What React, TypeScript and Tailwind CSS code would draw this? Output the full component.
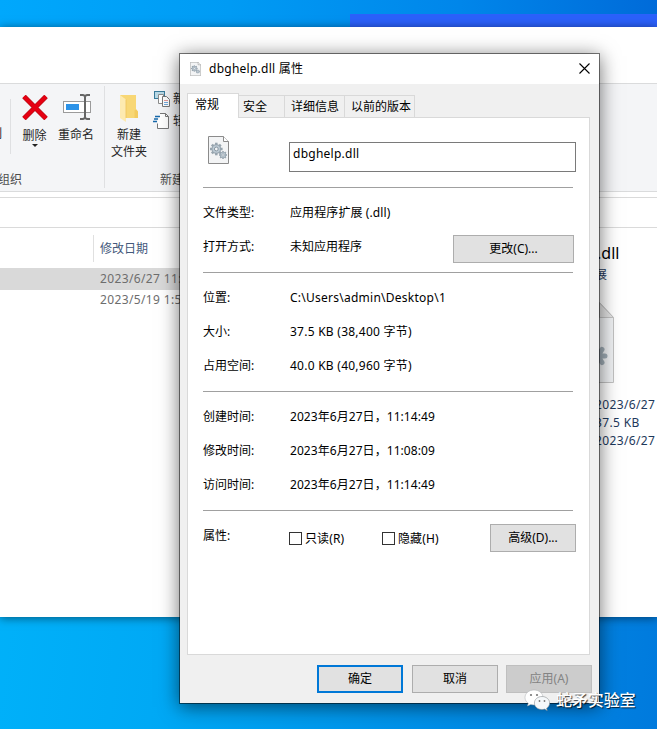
import type { ReactNode } from "react";

const times = [
  { label: "创建时间:", value: "2023年6月27日，11:14:49" },
  { label: "修改时间:", value: "2023年6月27日，11:08:09" },
  { label: "访问时间:", value: "2023年6月27日，11:14:49" },
];

const sizes = [
  { label: "位置:", value: "C:\\Users\\admin\\Desktop\\1" },
  { label: "大小:", value: "37.5 KB (38,400 字节)" },
  { label: "占用空间:", value: "40.0 KB (40,960 字节)" },
];

function Gear({ cx, cy, r }: { cx: number; cy: number; r: number }) {
  return (
    <g transform={`translate(${cx} ${cy})`}>
      {[0, 45, 90, 135].map((a) => (
        <rect
          key={a}
          x={-r * 0.2}
          y={-r}
          width={r * 0.4}
          height={r * 2}
          fill="#97a4ae"
          transform={`rotate(${a})`}
        />
      ))}
      <circle r={r * 0.76} fill="#97a4ae" />
      <circle r={r * 0.6} fill="#bccad4" />
      <circle r={r * 0.3} fill="#f3f5f6" stroke="#84929d" strokeWidth={r * 0.15} />
    </g>
  );
}

function DllIcon({ className }: { className: string }) {
  return (
    <svg viewBox="0 0 21 28" className={className} preserveAspectRatio="none">
      <path d="M.5.5h15l5 5v22H.5z" fill="#f3f4f5" stroke="#8b8b8b" />
      <path d="M15.5.5v5h5" fill="#fff" stroke="#8b8b8b" />
      <Gear cx={8.3} cy={13} r={6.3} />
      <Gear cx={15} cy={19} r={4} />
    </svg>
  );
}

function Row({ label, children }: { label: string; children: ReactNode }) {
  return (
    <div className="flex h-[34px] items-center">
      <span className="w-[87px] shrink-0 pt-[2px]">{label}</span>
      {children}
    </div>
  );
}

function Separator() {
  return <div className="mt-[9px] mb-[7px] h-px w-[370px] bg-[#a0a0a0]" />;
}

function Button({ className = "", children }: { className?: string; children: ReactNode }) {
  return (
    <button
      className={`flex h-7 shrink-0 items-center justify-center border pb-px ${className}`}
    >
      {children}
    </button>
  );
}

function Checkbox({ label }: { label: string }) {
  return (
    <label className="flex items-center gap-[3px]">
      <span className="size-[13px] border border-[#333] bg-white" />
      <span className="pt-px tracking-[0.1px]">{label}</span>
    </label>
  );
}

function Ribbon() {
  return (
    <div className="flex h-[109px] border-y border-[#dadbdc] bg-[#f4f5f7] text-[#262626]">
      <div className="relative flex w-[105px] shrink-0">
        <div className="mt-[15px] h-[55px] w-[11px] shrink-0 overflow-hidden border-r border-[#dfe0e2]">
          <span className="float-right mt-[27px] mr-2 leading-4">制</span>
        </div>
        <div className="flex w-[47px] flex-col items-center pt-[11px]">
          <svg className="h-[25px] w-[26px]" viewBox="0 0 26 25">
            <path d="M2 1.5 24 23.5M24 1.5 2 23.5" stroke="#b80d16" strokeWidth="5" />
            <path d="M2 1.5 24 23.5M24 1.5 2 23.5" stroke="#e60012" strokeWidth="3.7" />
          </svg>
          <span className="mt-2 leading-4">删除</span>
          <span className="border-x-[3px] border-t-[3px] border-x-transparent border-t-[#222]" />
        </div>
        <div className="flex w-9 flex-col items-center pt-[9px]">
          <svg className="ml-[2px] h-7 w-[30px]" viewBox="0 0 30 28">
            <rect x="1.5" y="8.5" width="27" height="11" fill="#fff" stroke="#9b9b9b" />
            <rect x="4" y="11" width="13" height="6" fill="#2c93e8" />
            <path
              d="M18 2h3l2 1 2-1h3M18 26h3l2-1 2 1h3M23 2.500v23"
              fill="none"
              stroke="#666"
              strokeWidth="2"
            />
          </svg>
          <span className="mt-[6px] whitespace-nowrap leading-4">重命名</span>
        </div>
        <span className="absolute -left-0.5 top-[88px] leading-4 text-[#4c4c4c]">组织</span>
        <div className="mt-[2px] ml-auto h-[102px] w-px bg-[#dfe0e2]" />
      </div>
      <div className="relative flex">
        <div className="flex w-12 flex-col items-center pt-[10px]">
          <svg className="h-7 w-5" viewBox="0 0 20 28">
            <path d="M1 1h16v14l2 2.500V24H5z" fill="#f8d775" />
            <path d="M1 1l6 4.500V28L1 24z" fill="#fdeab0" />
            <path d="M7 5.500V24" stroke="#edc35c" strokeWidth=".8" />
            <path d="M15.500 16.500V24H19v-6.500l-2-2z" fill="#f3cb5f" />
          </svg>
          <span className="mt-[4px] whitespace-nowrap leading-[17px]">新建</span>
          <span className="whitespace-nowrap leading-[17px]">文件夹</span>
        </div>
        <div className="flex flex-col gap-1 pt-[6px]">
          <div className="flex items-center gap-[3px]">
            <svg className="h-[18px] w-[17px]" viewBox="0 0 17 18">
              <rect x="1.500" y="1.500" width="10" height="7" fill="#b9d9e6" stroke="#397b9b" />
              <path d="M5.500 4.500h5v9h-5z" fill="#fff" stroke="#8b8b8b" />
              <path d="M9.500 6.500h4l3 3v7h-7z" fill="#fff" stroke="#777" />
              <path d="M11 10.500h4" stroke="#e39a9a" />
              <path d="M11 12.500h4M11 14.500h4" stroke="#73a9dc" />
            </svg>
            <span>新建项目</span>
          </div>
          <div className="flex items-center gap-[3px]">
            <svg className="h-[18px] w-[17px]" viewBox="0 0 17 18">
              <path d="M7 1.500h5.500l3 3v12H4.500v-5" fill="#fff" stroke="#777" />
              <path d="M12.500 1.500v3h3" fill="none" stroke="#777" />
              <path d="M2 4.500h5M1 7h4M0 9.500h4" stroke="#1769aa" strokeWidth="1.400" />
            </svg>
            <span>轻松访问</span>
          </div>
        </div>
        <span className="absolute left-[55px] top-[88px] leading-4 text-[#4c4c4c]">新建</span>
      </div>
    </div>
  );
}

function Explorer() {
  return (
    <div className="absolute top-[27px] left-0 h-[590px] w-full bg-white pt-14 shadow-[0_1px_9px_rgba(0,0,0,0.5)]">
      <Ribbon />
      <div className="mt-[5px] h-[31px] border-y border-[#dadada]" />
      <div className="flex justify-between">
        <div className="w-[300px] pt-[7px]">
          <div className="ml-[93px] flex h-[27px] items-center border-l border-[#e0e0e0] pl-[6px] text-[#44597b]">
            修改日期
          </div>
          <div className="mt-[6px] flex h-[22px] items-center bg-[#d9d9d9] pl-[100px] tracking-[0.36px] text-[#6d6d6d]">
            2023/6/27 11:14
          </div>
          <div className="flex h-5 items-center pl-[100px] tracking-[0.36px] text-[#6d6d6d]">
            2023/5/19 1:58
          </div>
        </div>
        <div className="w-[62px] overflow-hidden pt-[15px] text-[#1e395b]">
          <div className="pl-[2px] text-base leading-5 text-black">.dll</div>
          <div className="mt-[2px] leading-5">展</div>
          <svg className="mt-[17px] h-[81px] w-5" viewBox="0 0 20 81">
            <path d="M-40 .5H4.500l14 15v65H-40z" fill="#f0f2f4" stroke="#c2c2c2" />
            <path d="M4.500 1v14.500h14z" fill="#e3e3e3" stroke="#c2c2c2" />
            <path
              d="M3 54h7M3 54l4-6.500M3 54l4 6.500"
              stroke="#a0adb6"
              strokeWidth="5"
              strokeLinecap="round"
            />
          </svg>
          <div className="mt-[13px] leading-[18px] tracking-[0.36px] whitespace-nowrap">
            <div>2023/6/27</div>
            <div>37.5 KB</div>
            <div>2023/6/27</div>
          </div>
        </div>
      </div>
    </div>
  );
}

function Tabs() {
  return (
    <div className="flex h-6 items-end pl-[7px]">
      <div className="relative z-10 -mb-px h-[25px] w-[52px] border border-b-0 border-[#d9d9d9] bg-white pt-[2px] pl-[7px] leading-[18px]">
        常规
      </div>
      <div className="h-[22px] w-[46px] border-t border-r border-[#d9d9d9] bg-[#f0f0f0] pl-1 leading-[22px]">
        安全
      </div>
      <div className="h-[22px] w-[60px] border-t border-r border-[#d9d9d9] bg-[#f0f0f0] pl-[6px] leading-[22px] whitespace-nowrap">
        详细信息
      </div>
      <div className="h-[22px] w-[70px] border-t border-r border-[#d9d9d9] bg-[#f0f0f0] pl-[6px] leading-[22px] whitespace-nowrap">
        以前的版本
      </div>
    </div>
  );
}

function PropertiesDialog() {
  return (
    <div className="absolute top-[53px] left-[179px] flex h-[651px] w-[421px] flex-col border border-black/50 bg-[#f0f0f0] bg-clip-padding shadow-[0_3px_18px_rgba(0,0,0,0.55)]">
      <div className="flex h-[30px] shrink-0 items-center bg-white pr-[9px] pl-[10px]">
        <DllIcon className="h-[14px] w-[11px]" />
        <span className="ml-2 flex-1 tracking-[0.26px]">dbghelp.dll 属性</span>
        <svg className="mb-[2px] size-[11px]" viewBox="0 0 11 11">
          <path d="M.5.5l10 10M10.500.5l-10 10" stroke="#000" strokeWidth="1.100" />
        </svg>
      </div>
      <div className="mt-[9px]">
        <Tabs />
      </div>
      <div className="ml-[7px] h-[538px] w-[403px] border border-[#d9d9d9] bg-white pl-[15px]">
        <div className="flex h-[60px] pt-[18px] pl-[5px]">
          <DllIcon className="h-7 w-[21px]" />
          <div className="mt-[6px] ml-[60px] h-[30px] w-[287px] border border-[#7a7a7a] pl-[3px] leading-[22px] tracking-[0.26px]">
            dbghelp.dll
          </div>
        </div>
        <Separator />
        <Row label="文件类型:">
          <span className="pt-[2px] tracking-[0.1px]">应用程序扩展 (.dll)</span>
        </Row>
        <Row label="打开方式:">
          <span className="w-[163px] pt-[2px]">未知应用程序</span>
          <Button className="mt-[6px] w-[121px] border-[#adadad] bg-[#e1e1e1]">更改(C)...</Button>
        </Row>
        <Separator />
        {sizes.map((s) => (
          <Row key={s.label} label={s.label}>
            <span className="pt-[2px] tracking-[0.25px]">{s.value}</span>
          </Row>
        ))}
        <Separator />
        {times.map((t) => (
          <Row key={t.label} label={t.label}>
            <span className="pt-[2px] tracking-[0.06px]">{t.value}</span>
          </Row>
        ))}
        <Separator />
        <Row label="属性:">
          <div className="mt-[6px] -ml-px flex w-[201px]">
            <div className="w-[93px]">
              <Checkbox label="只读(R)" />
            </div>
            <Checkbox label="隐藏(H)" />
          </div>
          <Button className="mt-[6px] w-[86px] border-[#adadad] bg-[#e1e1e1]">高级(D)...</Button>
        </Row>
      </div>
      <div className="mt-[10px] flex justify-end pr-[7px]">
        <Button className="mr-[9px] w-[86px] border-2 border-[#0078d7] bg-[#e1e1e1]">确定</Button>
        <Button className="mr-2 w-[86px] border-[#adadad] bg-[#e1e1e1]">取消</Button>
        <Button className="w-[86px] border-[#bfbfbf] bg-[#cccccc] text-[#838383]">应用(A)</Button>
      </div>
    </div>
  );
}

function Watermark() {
  return (
    <div className="absolute top-[688px] left-[524px] flex items-center gap-[6px] text-white">
      <svg className="h-[23px] w-[27px]" viewBox="0 0 27 23">
        <path
          d="M10 1C5 1 1 4.200 1 8.500c0 2.500 1.300 4.500 3.300 5.800L3.500 17l3.200-1.600c1 .3 2.100.5 3.300.5 5 0 9-3.200 9-7.400S15 1 10 1z"
          fill="#fff"
          stroke="#a9adb0"
          strokeWidth=".5"
        />
        <path
          d="M18 7.500c-4.300 0-7.600 2.900-7.600 6.500s3.300 6.500 7.600 6.500c.9 0 1.800-.1 2.600-.4l2.600 1.400-.6-2.300c1.900-1.200 3-3.100 3-5.200 0-3.600-3.400-6.500-7.600-6.500z"
          fill="#f5f8fa"
          stroke="#8d9296"
          strokeWidth=".6"
        />
        <g fill="#777">
          <circle cx="7" cy="6" r="1.100" />
          <circle cx="13" cy="6" r="1.100" />
          <circle cx="15.500" cy="12" r=".9" />
          <circle cx="20.500" cy="12" r=".9" />
        </g>
      </svg>
      <span className="-ml-px text-base leading-6 font-medium tracking-[-0.1px] [text-shadow:1px_1px_1px_rgba(0,0,0,0.75)]">
        蛇矛实验室
      </span>
    </div>
  );
}

export default function App() {
  return (
    <main className="relative h-[729px] w-[657px] overflow-hidden bg-[linear-gradient(97deg,#00b4fb_0%,#00a9f5_32%,#0090e8_68%,#007add_100%)] font-['Noto_Sans','Noto_Sans_CJK_SC',sans-serif] text-xs text-black">
      <div className="absolute top-0 left-0 h-7 w-full bg-[linear-gradient(90deg,#00a8fc_0%,#009bf4_35%,#0086ea_70%,#006bd9_100%)]" />
      <div className="absolute top-[14px] left-[350px] h-[14px] w-[307px] bg-[#2b61fb]" />
      <Explorer />
      <PropertiesDialog />
      <Watermark />
    </main>
  );
}
